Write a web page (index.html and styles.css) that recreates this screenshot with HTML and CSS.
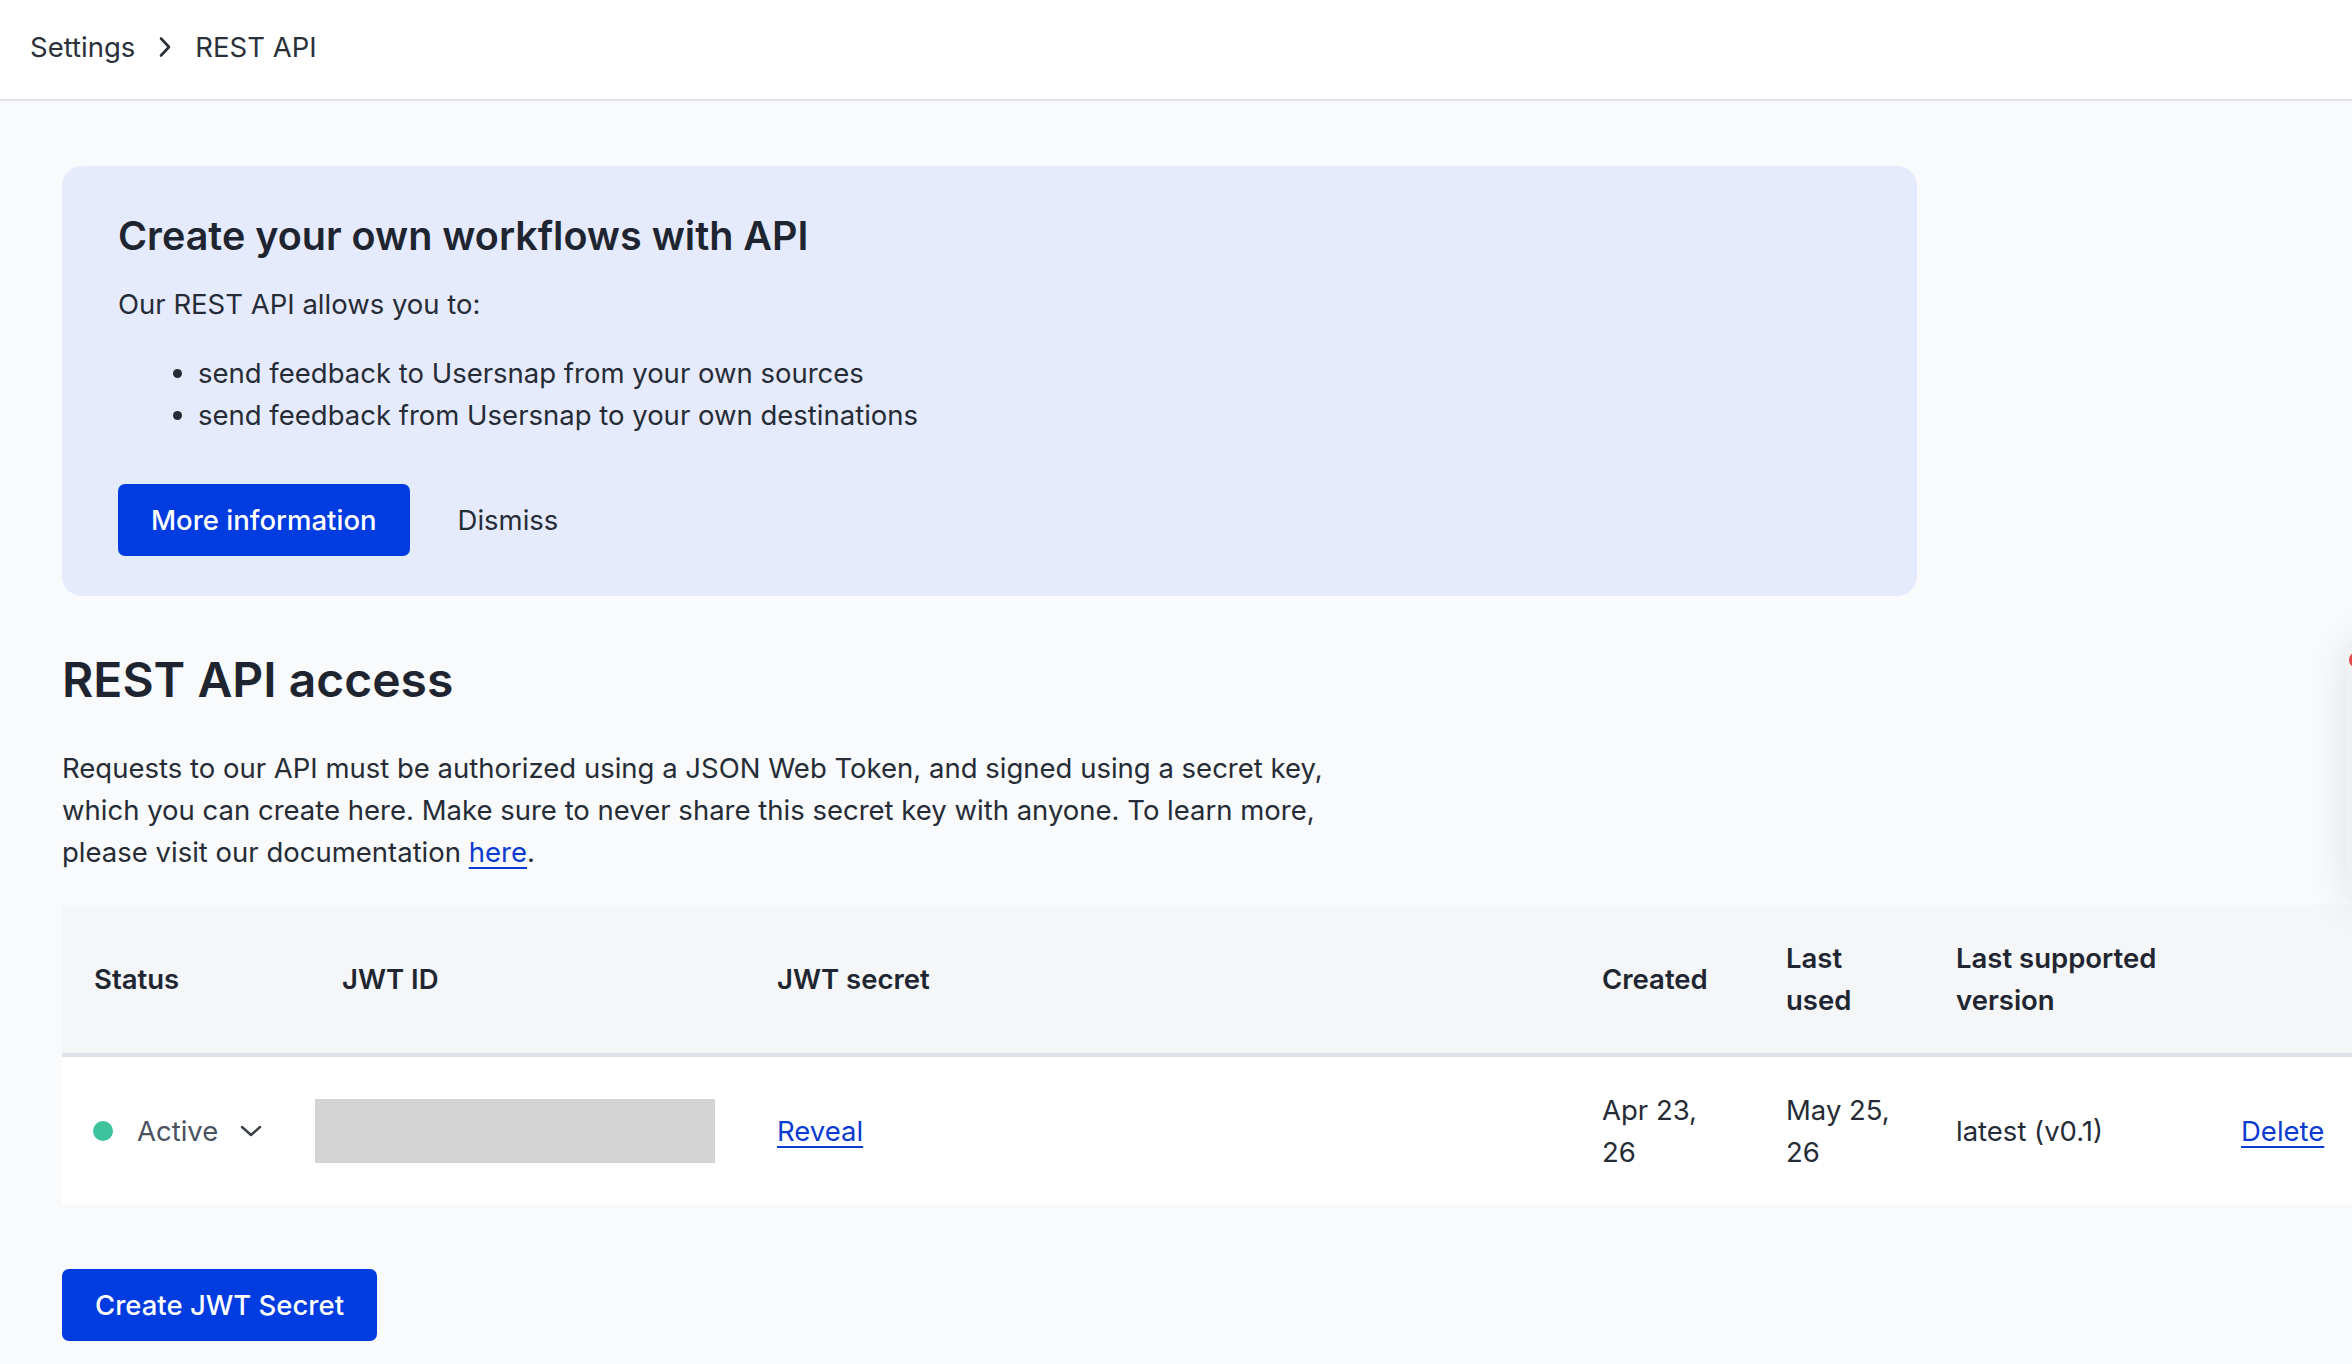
FILE: index.html
```html
<!DOCTYPE html>
<html lang="en">
<head>
    <meta charset="UTF-8">
    <meta name="viewport" content="width=device-width, initial-scale=1.0">
    <title>REST API - Settings</title>
    <link rel="stylesheet" href="styles.css">
</head>
<body>
    <header class="topbar">
        <nav class="breadcrumb">
            <a href="#" class="crumb">Settings</a>
            <svg class="crumb-sep" width="16" height="22" viewBox="0 0 16 22" fill="none">
                <path d="M4 2.5 L12 11 L4 19.5" stroke="#2a303a" stroke-width="2.6" stroke-linecap="round" stroke-linejoin="round"/>
            </svg>
            <span class="crumb current">REST API</span>
        </nav>
    </header>

    <main class="content">
        <section class="banner">
            <h2 class="banner-title">Create your own workflows with API</h2>
            <p class="banner-text">Our REST API allows you to:</p>
            <ul class="banner-list">
                <li>send feedback to Usersnap from your own sources</li>
                <li>send feedback from Usersnap to your own destinations</li>
            </ul>
            <div class="banner-actions">
                <button type="button" class="btn btn-primary">More information</button>
                <button type="button" class="btn btn-plain">Dismiss</button>
            </div>
        </section>

        <h1 class="page-title">REST API access</h1>
        <p class="intro">Requests to our API must be authorized using a JSON Web Token, and signed using a secret key, which you can create here. Make sure to never share this secret key with anyone. To learn more, please visit our documentation <a href="#" class="link">here</a>.</p>

        <table class="keys">
            <colgroup>
                <col class="c-status">
                <col class="c-id">
                <col class="c-secret">
                <col class="c-created">
                <col class="c-used">
                <col class="c-version">
                <col class="c-action">
            </colgroup>
            <thead>
                <tr>
                    <th>Status</th>
                    <th>JWT ID</th>
                    <th>JWT secret</th>
                    <th>Created</th>
                    <th>Last used</th>
                    <th>Last supported version</th>
                    <th></th>
                </tr>
            </thead>
            <tbody>
                <tr>
                    <td>
                        <span class="status">
                            <span class="dot"></span>
                            <span class="status-label">Active</span>
                            <svg class="caret" width="22" height="14" viewBox="0 0 22 14" fill="none">
                                <path d="M2 3 L11 11 L20 3" stroke="#3a404a" stroke-width="2.4" stroke-linecap="round" stroke-linejoin="round"/>
                            </svg>
                        </span>
                    </td>
                    <td class="td-id"><div class="masked"></div></td>
                    <td><a href="#" class="link">Reveal</a></td>
                    <td>Apr 23, 26</td>
                    <td>May 25, 26</td>
                    <td>latest (v0.1)</td>
                    <td><a href="#" class="link">Delete</a></td>
                </tr>
            </tbody>
        </table>

        <button type="button" class="btn btn-primary btn-create">Create JWT Secret</button>
    </main>

    <div class="feedback-tab"><span class="feedback-dot"></span></div>
</body>
</html>
```

FILE: styles.css
```css
html, body {
    margin: 0;
    padding: 0;
}
body {
    font-family: Inter, "Noto Sans", Arial, sans-serif;
    font-size: 27.5px;
    line-height: 42px;
    color: #262c36;
    background-color: #f8fafc;
    overflow: hidden;
    width: 2352px;
    height: 1364px;
}
.topbar {
    height: 99px;
    background-color: #fff;
    border-bottom: 2px solid #dfe2e8;
    display: flex;
    align-items: center;
    padding-left: 30px;
}
.breadcrumb {
    display: flex;
    align-items: center;
    gap: 22px;
    margin-top: -5px;
}
.crumb {
    color: #2a303a;
    text-decoration: none;
}
.content {
    padding: 65px 0 0 62px;
}
.banner {
    width: 1855px;
    box-sizing: border-box;
    background-color: #e5ebfd;
    border-radius: 20px;
    padding: 45px 56px 40px;
}
.banner-title {
    margin: 0;
    font-size: 39.5px;
    line-height: 50px;
    font-weight: 600;
    color: #1e2530;
}
.banner-text {
    margin: 22px 0 0;
}
.banner-list {
    margin: 27px 0 0;
    padding-left: 80px;
}
.banner-actions {
    display: flex;
    align-items: center;
    gap: 32px;
    margin-top: 48px;
}
.btn {
    font-family: inherit;
    font-size: 27.5px;
    line-height: 42px;
    border: none;
    cursor: pointer;
}
.btn-primary {
    height: 72px;
    padding: 0 33px;
    background-color: #003ce0;
    color: #fff;
    font-weight: 500;
    border-radius: 7px;
}
.btn-primary:hover {
    background-color: #0030b8;
}
.btn-plain {
    background: none;
    color: #262c36;
    padding: 0 16px;
}
.page-title {
    margin: 54px 0 0;
    font-size: 48px;
    line-height: 60px;
    font-weight: 600;
    color: #1e2530;
}
.intro {
    margin: 37px 0 0;
    max-width: 1300px;
}
.link {
    color: #0a3bd0;
    text-decoration: underline;
    text-underline-offset: 5px;
    text-decoration-thickness: 2px;
}
.keys {
    margin-top: 32px;
    width: 2290px;
    table-layout: fixed;
    border-collapse: collapse;
}
.c-status { width: 248px; }
.c-id { width: 435px; }
.c-secret { width: 825px; }
.c-created { width: 184px; }
.c-used { width: 170px; }
.c-version { width: 285px; }
.c-action { width: 143px; }
.keys th, .keys td {
    text-align: left;
    vertical-align: middle;
    padding: 0 24px 0 32px;
}
.keys th {
    height: 148px;
    background-color: #f4f6f8;
    font-weight: 600;
    color: #1f2631;
    border-bottom: 4px solid #dfe3ea;
}
.keys td {
    height: 147px;
    background-color: #fff;
    color: #262c36;
}
.keys td.td-id {
    padding-left: 5px;
}
.status {
    display: flex;
    align-items: center;
    color: #4a5260;
}
.dot {
    width: 20px;
    height: 20px;
    border-radius: 50%;
    background-color: #3cc39b;
    margin-left: -1px;
    margin-right: 24px;
}
.caret {
    margin-left: 22px;
}
.masked {
    width: 400px;
    height: 64px;
    background-color: #d4d4d4;
}
.btn-create {
    margin-top: 65px;
}
.feedback-tab {
    position: fixed;
    top: 640px;
    right: -94px;
    width: 100px;
    height: 262px;
    background-color: #eff1f3;
    border-radius: 12px 0 0 12px;
    box-shadow: 0 0 40px rgba(20, 30, 50, 0.10);
}
.feedback-dot {
    position: absolute;
    top: 12px;
    left: 3px;
    width: 16px;
    height: 16px;
    border-radius: 50%;
    background-color: #e5484d;
}
```
